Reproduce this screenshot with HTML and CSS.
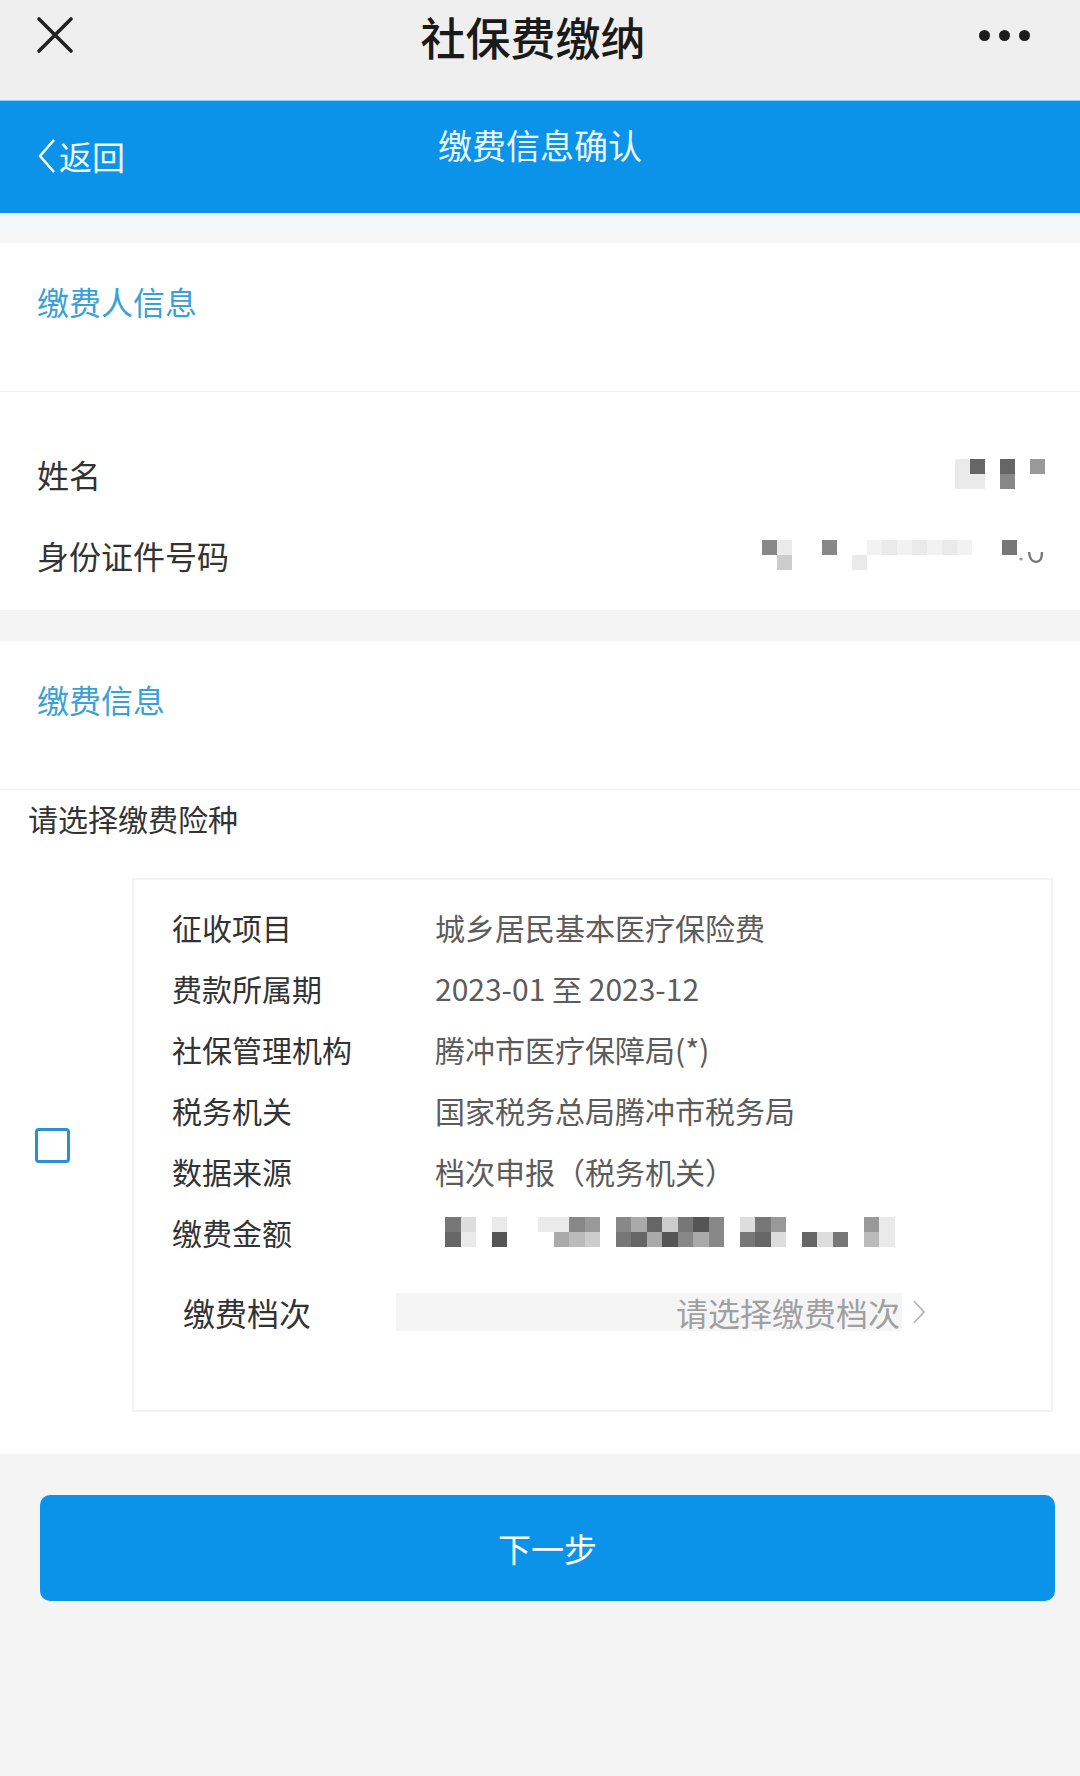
FILE: index.html
```html
<!DOCTYPE html>
<html lang="zh-CN">
<head>
  <meta charset="UTF-8" />
  <meta name="viewport" content="width=device-width, initial-scale=1.0"/>
  <title>社保费缴纳</title>
  <link rel="stylesheet" href="styles.css">
</head>
<body>
  <div class="topbar">
    <span class="close">
      <svg width="38" height="38" viewBox="0 0 38 38"><path d="M3 3 L35 35 M35 3 L3 35" stroke="#222" stroke-width="3.6" stroke-linecap="round" fill="none"/></svg>
    </span>
    <div class="app-title">社保费缴纳</div>
    <span class="more"><i></i><i></i><i></i></span>
  </div>

  <div class="navbar">
    <a class="back">
      <svg width="20" height="36" viewBox="0 0 20 36"><path d="M17 2 L3 18 L17 34" stroke="#fff" stroke-width="2.6" fill="none" stroke-linejoin="round"/></svg>
      返回
    </a>
    <div class="nav-title">缴费信息确认</div>
    <span></span>
  </div>
  <div class="strip"></div>

  <section class="panel">
    <h2 class="panel-head">缴费人信息</h2>
    <div class="info-list">
      <div class="info-row">
        <span>姓名</span>
        <span class="mosaic">
          <i class="ce"></i><i class="ce"></i>
          <i class="c6"></i><i class="ce"></i>
          <i></i><i></i>
          <i class="c6"></i><i class="c8"></i>
          <i></i><i></i>
          <i class="c9"></i><i></i>
        </span>
      </div>
      <div class="info-row">
        <span>身份证件号码</span>
        <span class="id-mask">
          <span class="mosaic">
            <i class="c8"></i><i></i>
            <i class="ce"></i><i class="cc"></i>
            <i></i><i></i>
            <i></i><i></i>
            <i class="c8"></i><i></i>
            <i></i><i></i>
            <i></i><i class="ce"></i>
            <i class="cf"></i><i></i>
            <i class="ce"></i><i></i>
            <i class="cf"></i><i></i>
            <i class="ce"></i><i></i>
            <i class="cf"></i><i></i>
            <i class="ce"></i><i></i>
            <i class="cf"></i><i></i>
            <i></i><i></i>
            <i></i><i></i>
            <i class="c7"></i><i></i>
          </span>
          <svg width="28" height="30" viewBox="0 0 28 30"><circle cx="4" cy="19" r="1.6" fill="#999"/><path d="M12 12 Q13 22 19 22 Q25 22 25 12" stroke="#777" stroke-width="2.4" fill="none"/></svg>
        </span>
      </div>
    </div>
  </section>

  <section class="panel">
    <h2 class="panel-head">缴费信息</h2>
    <div class="pick-label">请选择缴费险种</div>
    <div class="choice">
      <div class="check-col"><span class="checkbox"></span></div>
      <div class="card">
        <div class="card-row"><span class="key">征收项目</span><span class="val">城乡居民基本医疗保险费</span></div>
        <div class="card-row"><span class="key">费款所属期</span><span class="val">2023-01 至 2023-12</span></div>
        <div class="card-row"><span class="key">社保管理机构</span><span class="val">腾冲市医疗保障局(*)</span></div>
        <div class="card-row"><span class="key">税务机关</span><span class="val">国家税务总局腾冲市税务局</span></div>
        <div class="card-row"><span class="key">数据来源</span><span class="val">档次申报（税务机关）</span></div>
        <div class="card-row">
          <span class="key">缴费金额</span>
          <span class="mosaic amount">
            <i class="c7"></i><i class="c6"></i>
            <i class="cd"></i><i class="ce"></i>
            <i></i><i></i>
            <i class="ce"></i><i class="c5"></i>
            <i></i><i></i>
            <i></i><i></i>
            <i class="ce"></i><i></i>
            <i class="ce"></i><i class="ca"></i>
            <i class="c8"></i><i class="cb"></i>
            <i class="c9"></i><i class="cc"></i>
            <i></i><i></i>
            <i class="c8"></i><i class="c7"></i>
            <i class="ca"></i><i class="c6"></i>
            <i class="c6"></i><i class="ca"></i>
            <i class="cc"></i><i class="c5"></i>
            <i class="c7"></i><i class="c8"></i>
            <i class="c5"></i><i class="ca"></i>
            <i class="c8"></i><i class="c8"></i>
            <i></i><i></i>
            <i class="cd"></i><i class="c7"></i>
            <i class="c7"></i><i class="c6"></i>
            <i class="c9"></i><i class="cd"></i>
            <i></i><i></i>
            <i></i><i class="c6"></i>
            <i></i><i class="cd"></i>
            <i></i><i class="c7"></i>
            <i></i><i></i>
            <i class="c9"></i><i class="cb"></i>
            <i class="ce"></i><i class="ce"></i>
          </span>
        </div>
        <div class="pick-row">
          <span class="pick-key">缴费档次</span>
          <span class="pick-box">请选择缴费档次</span>
          <svg class="arrow" width="16" height="26" viewBox="0 0 16 26"><path d="M3 2 L13 13 L3 24" stroke="#b5b5b5" stroke-width="1.8" fill="none"/></svg>
        </div>
      </div>
    </div>
  </section>

  <button class="next-btn">下一步</button>
</body>
</html>
```

FILE: styles.css
```css
body {
  margin: 0;
  background: #f4f4f5;
  font-family: "Noto Sans CJK SC", "Noto Sans", sans-serif;
  color: #333;
}

.topbar {
  display: grid;
  grid-template-columns: 1fr auto 1fr;
  height: 100px;
  padding: 0 50px 0 36px;
  background: #efefef;
}

.close {
  margin-top: 16px;
}

.app-title {
  margin-top: 11px;
  font-size: 45px;
  line-height: 52px;
  font-weight: 500;
  color: #1a1a1a;
}

.more {
  justify-self: end;
  display: flex;
  gap: 9px;
  margin-top: 30px;
}

.more i {
  width: 11px;
  height: 11px;
  border-radius: 50%;
  background: #1c1c1c;
}

.navbar {
  display: grid;
  grid-template-columns: 1fr auto 1fr;
  height: 113px;
  background: #0b93ea;
  border-top: 1px solid #8fd2ff;
  box-sizing: border-box;
}

.back {
  display: flex;
  align-items: center;
  gap: 2px;
  margin: 35px 0 0 37px;
  height: 40px;
  font-size: 33px;
  color: #f2f9ff;
}

.nav-title {
  margin-top: 24px;
  font-size: 34px;
  line-height: 40px;
  color: #eaf6ff;
}

.strip {
  height: 30px;
  background: linear-gradient(#f0f7fb, #f6f6f6);
}

.panel {
  background: white;
  margin-bottom: 31px;
}

.panel-head {
  margin: 0;
  height: 149px;
  box-sizing: border-box;
  padding: 39px 37px 0;
  font-size: 32px;
  line-height: 38px;
  font-weight: normal;
  color: #3b9fd8;
  border-bottom: 1px solid #f0f0f0;
}

.info-list {
  padding: 41px 35px 15px 37px;
}

.info-row {
  display: flex;
  align-items: center;
  justify-content: space-between;
  height: 81px;
  font-size: 32px;
}

.mosaic {
  display: grid;
  grid-auto-flow: column;
  grid-template-rows: 15px 15px;
  grid-auto-columns: 15px;
}

.id-mask {
  display: flex;
  align-items: center;
}

.c5 { background: #555; }
.c6 { background: #666; }
.c7 { background: #777; }
.c8 { background: #888; }
.c9 { background: #999; }
.ca { background: #aaa; }
.cb { background: #bbb; }
.cc { background: #ccc; }
.cd { background: #ddd; }
.ce { background: #eaeaea; }
.cf { background: #f2f2f2; }

.pick-label {
  padding: 8px 28px 0;
  font-size: 30px;
  line-height: 40px;
}

.choice {
  display: flex;
  align-items: center;
  margin-top: 40px;
  padding-bottom: 42px;
}

.check-col {
  width: 132px;
  padding-left: 35px;
  box-sizing: border-box;
}

.checkbox {
  display: block;
  width: 35px;
  height: 35px;
  box-sizing: border-box;
  border: 3px solid #2b8fd4;
  border-radius: 4px;
}

.card {
  width: 921px;
  box-sizing: border-box;
  padding: 16px 0 79px 38px;
  border: 2px solid #f2f2f2;
}

.card-row {
  display: flex;
  align-items: center;
  height: 61px;
  font-size: 30px;
}

.key {
  width: 263px;
  color: #333;
}

.val {
  color: #5c5c5c;
}

.amount {
  margin-left: 10px;
  grid-auto-columns: 15.5px;
}

.pick-row {
  display: flex;
  align-items: center;
  margin: 31px 0 0 11px;
  height: 38px;
}

.pick-key {
  width: 213px;
  font-size: 32px;
  color: #333;
}

.pick-box {
  width: 506px;
  height: 38px;
  padding-right: 2px;
  box-sizing: border-box;
  background: #f5f5f5;
  text-align: right;
  font-size: 32px;
  line-height: 38px;
  color: #a0a0a0;
}

.arrow {
  margin-left: 9px;
}

.next-btn {
  display: block;
  width: 1015px;
  height: 106px;
  margin: 41px 25px 0 40px;
  border: none;
  border-radius: 10px;
  background: #0b93ea;
  color: white;
  font-family: inherit;
  font-size: 33px;
}
```
